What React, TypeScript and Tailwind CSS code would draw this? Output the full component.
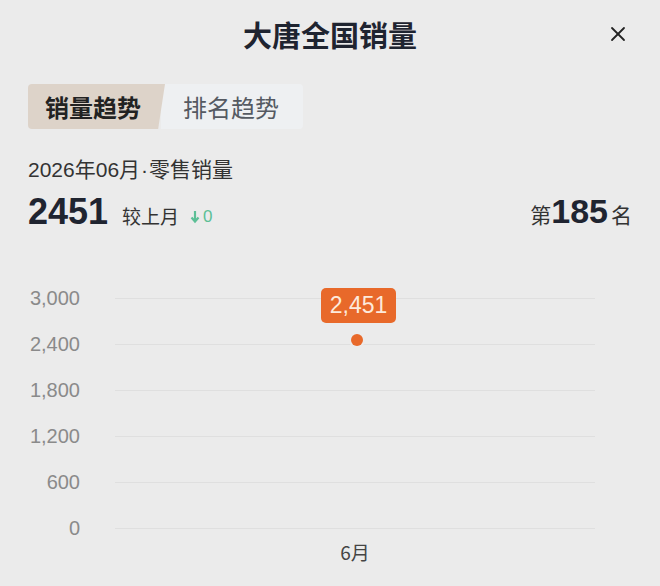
import { X } from "lucide-react";

const cjk = "font-['Noto_Sans_CJK_SC','Noto_Sans',sans-serif]";
const num = "font-['Liberation_Sans','Noto_Sans_CJK_SC',sans-serif]";

const ticks = ["3,000", "2,400", "1,800", "1,200", "600", "0"];

function SalesChart() {
  return (
    <div className="relative mt-[66px]">
      <div className="flex flex-col gap-[46px]">
        {ticks.map((t) => (
          <div key={t} className="flex h-0 items-center">
            <span className={`w-[80px] text-right text-[20px] text-[#8a8a8a] ${num}`}>
              {t}
            </span>
            <div className="ml-[35px] h-px w-[480px] bg-[#dfdfdf]" />
          </div>
        ))}
      </div>
      <div className={`ml-[115px] mt-[10px] w-[480px] text-center text-[19px] text-[#444] ${cjk}`}>
        6月
      </div>

      {/* data point for June */}
      <div className="absolute left-[349px] top-[34px] h-[16px] w-[16px] rounded-full bg-[#ebebeb] p-[2px]">
        <div className="h-full w-full rounded-full bg-[#e8692a]" />
      </div>
      <div
        className={`absolute left-[321px] top-[-10px] flex h-[35px] w-[75px] items-center justify-center rounded-[5px] bg-[#e8692a] text-[23px] text-[#fdeadb] ${num}`}
      >
        2,451
      </div>
    </div>
  );
}

export default function App() {
  return (
    <div className={`h-[586px] w-[660px] overflow-hidden bg-[#ebebeb] px-[28px] ${cjk}`}>
      <div className="grid h-[68px] grid-cols-[1fr_auto_1fr] items-center">
        <div />
        <h1 className="text-[29px] font-bold leading-none text-[#1f2430]">大唐全国销量</h1>
        <div className="flex justify-end pr-[2px]">
          <X size={24} strokeWidth={1.8} className="text-[#222]" />
        </div>
      </div>

      <div className="mt-[16px] flex h-[45px]">
        <div className="relative z-10 flex w-[137px] items-center rounded-l-[4px] bg-[#ddd3c9] pl-[17px] text-[24px] font-bold text-[#222] [clip-path:polygon(0_0,100%_0,95%_100%,0_100%)]">
          销量趋势
        </div>
        <div className="-ml-[4px] flex w-[142px] items-center rounded-r-[4px] bg-[#eef0f2] pl-[22px] text-[24px] text-[#555a62]">
          排名趋势
        </div>
      </div>

      <div className="mt-[25px] text-[21px] leading-[28px] text-[#333]">
        <span className={num}>2026</span>年<span className={num}>06</span>月<span className={`mx-[1px] ${num}`}>·</span>零售销量
      </div>

      <div className="mt-[8px] flex h-[40px] items-center justify-between">
        <div className="flex items-baseline">
          <span className={`text-[36px] font-bold leading-none text-[#1f2430] ${num}`}>2451</span>
          <span className="ml-[14px] text-[19px] text-[#333]">较上月</span>
          <span className={`ml-[11px] flex items-center text-[17px] text-[#5cbf96] ${num}`}>
            <svg width="10" height="14" viewBox="0 0 10 14" className="mr-[3px]">
              <path d="M5 1v10M1.5 7.5 5 11.5l3.5-4" fill="none" stroke="currentColor" strokeWidth="2.2" />
            </svg>
            0
          </span>
        </div>
        <div className="flex items-baseline">
          <span className="text-[21px] text-[#333]">第</span>
          <span className={`text-[34px] font-bold leading-none text-[#1f2430] ${num}`}>185</span>
          <span className="ml-[3px] text-[21px] text-[#333]">名</span>
        </div>
      </div>

      <div className="-mx-[28px]">
        <SalesChart />
      </div>
    </div>
  );
}
